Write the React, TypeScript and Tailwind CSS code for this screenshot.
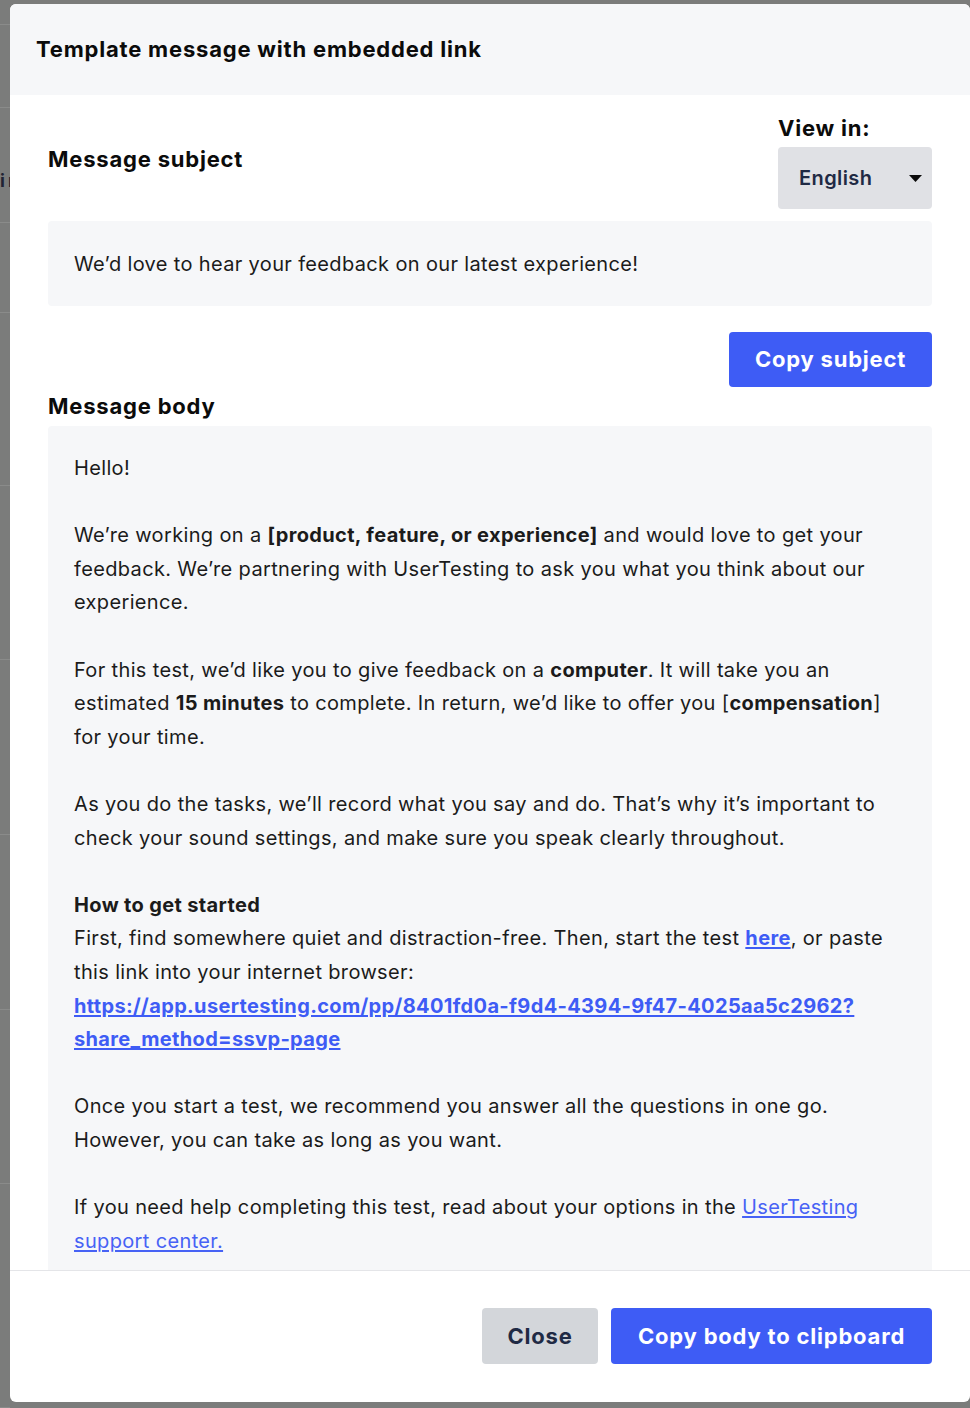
import React from "react";

const font = { fontFamily: "Inter, 'Open Sans', Arial, sans-serif" };

function BackdropStrip() {
  // the page behind the overlay peeks out on the left
  const rows = [21, 83, 115, 90, 173, 174, 175, 175, 174, 224];
  return (
    <div className="w-[10px] shrink-0 flex flex-col">
      {rows.map((h, i) => (
        <div
          key={i}
          style={{ height: h }}
          className={
            i === 2
              ? "border-b border-[#8a8b8a] flex items-start pt-[64px] overflow-hidden"
              : "border-b border-[#8a8b8a] overflow-hidden"
          }
        >
          {i === 2 && (
            <span className="text-[18px] font-bold text-[#1f2333] leading-none tracking-[3px]">
              ir
            </span>
          )}
        </div>
      ))}
    </div>
  );
}

export default function App() {
  return (
    <div
      className="w-[970px] h-[1408px] bg-[#7b7c7b] pt-[4px] flex overflow-hidden"
      style={font}
    >
      <BackdropStrip />

      <div className="w-[960px] h-[1398px] bg-white rounded-[6px] flex flex-col overflow-hidden">
        {/* Header */}
        <div className="h-[91px] shrink-0 bg-[#f6f7f9] px-[26px] flex items-center">
          <h2 className="text-[22px] font-bold text-[#0b0b0b] tracking-[0.8px]">
            Template message with embedded link
          </h2>
        </div>

        {/* Scroll area */}
        <div className="flex-1 min-h-0 overflow-hidden px-[38px] pt-[16px] flex flex-col">
          <div className="shrink-0 flex items-center justify-between">
            <h3 className="text-[22px] font-bold text-[#0b0b0b] mb-[2px] tracking-[0.8px]">
              Message subject
            </h3>
            <div className="flex flex-col w-[154px]">
              <span className="text-[22px] font-bold text-[#0b0b0b] leading-[34px] tracking-[0.8px]">
                View in:
              </span>
              <button className="mt-[2px] h-[62px] rounded-[4px] bg-[#e0e1e5] pl-[21px] pr-[10px] flex items-center justify-between">
                <span className="text-[20px] font-semibold text-[#1f2a44] tracking-[0.4px]">English</span>
                <svg width="13" height="7" viewBox="0 0 13 7">
                  <path d="M0 0h13L6.5 7z" fill="#0b0b0b" />
                </svg>
              </button>
            </div>
          </div>

          <div className="shrink-0 mt-[12px] h-[85px] rounded-[4px] bg-[#f6f7f9] px-[26px] flex items-center">
            <p className="text-[20px] text-[#1b1b1b] tracking-[0.35px]">
              We’d love to hear your feedback on our latest experience!
            </p>
          </div>

          <button className="shrink-0 mt-[26px] self-end h-[55px] w-[203px] rounded-[4px] bg-[#3e5cf5] text-white text-[22px] font-bold tracking-[0.8px]">
            Copy subject
          </button>

          <h3 className="shrink-0 mt-[6px] text-[22px] font-bold text-[#0b0b0b] leading-[26px] tracking-[0.8px]">
            Message body
          </h3>

          <div className="shrink-0 mt-[7px] rounded-[4px] bg-[#f6f7f9] px-[26px] pt-[26px] pb-[40px] text-[20px] leading-[33.6px] tracking-[0.35px] text-[#1b1b1b] whitespace-nowrap">
            <p className="mb-[33.6px]">Hello!</p>
            <p className="mb-[33.6px]">
              We’re working on a <b>[product, feature, or experience]</b> and would love to get your
              <br />
              feedback. We’re partnering with UserTesting to ask you what you think about our
              <br />
              experience.
            </p>
            <p className="mb-[33.6px]">
              For this test, we’d like you to give feedback on a <b>computer</b>. It will take you an
              <br />
              estimated <b>15 minutes</b> to complete. In return, we’d like to offer you [
              <b>compensation</b>]
              <br />
              for your time.
            </p>
            <p className="mb-[33.6px]">
              As you do the tasks, we’ll record what you say and do. That’s why it’s important to
              <br />
              check your sound settings, and make sure you speak clearly throughout.
            </p>
            <p className="mb-[33.6px]">
              <b>How to get started</b>
              <br />
              First, find somewhere quiet and distraction-free. Then, start the test{" "}
              <a className="font-bold text-[#3e5cf5] underline underline-offset-2">here</a>, or paste
              <br />
              this link into your internet browser:
              <br />
              <a className="font-bold text-[#3e5cf5] underline underline-offset-2">
                https://app.usertesting.com/pp/8401fd0a-f9d4-4394-9f47-4025aa5c2962?
                <br />
                share_method=ssvp-page
              </a>
            </p>
            <p className="mb-[33.6px]">
              Once you start a test, we recommend you answer all the questions in one go.
              <br />
              However, you can take as long as you want.
            </p>
            <p>
              If you need help completing this test, read about your options in the{" "}
              <a className="text-[#4762f5] underline underline-offset-2">
                UserTesting
                <br />
                support center.
              </a>
            </p>
          </div>
        </div>

        {/* Footer */}
        <div className="h-[132px] shrink-0 border-t border-[#e4e5e8] pt-[37px] pr-[38px] flex justify-end items-start gap-[13px]">
          <button className="h-[56px] w-[116px] rounded-[4px] bg-[#d3d6da] text-[#1f2a44] text-[22px] font-bold tracking-[0.8px]">
            Close
          </button>
          <button className="h-[56px] w-[321px] rounded-[4px] bg-[#3e5cf5] text-white text-[22px] font-bold tracking-[0.8px]">
            Copy body to clipboard
          </button>
        </div>
      </div>
    </div>
  );
}
